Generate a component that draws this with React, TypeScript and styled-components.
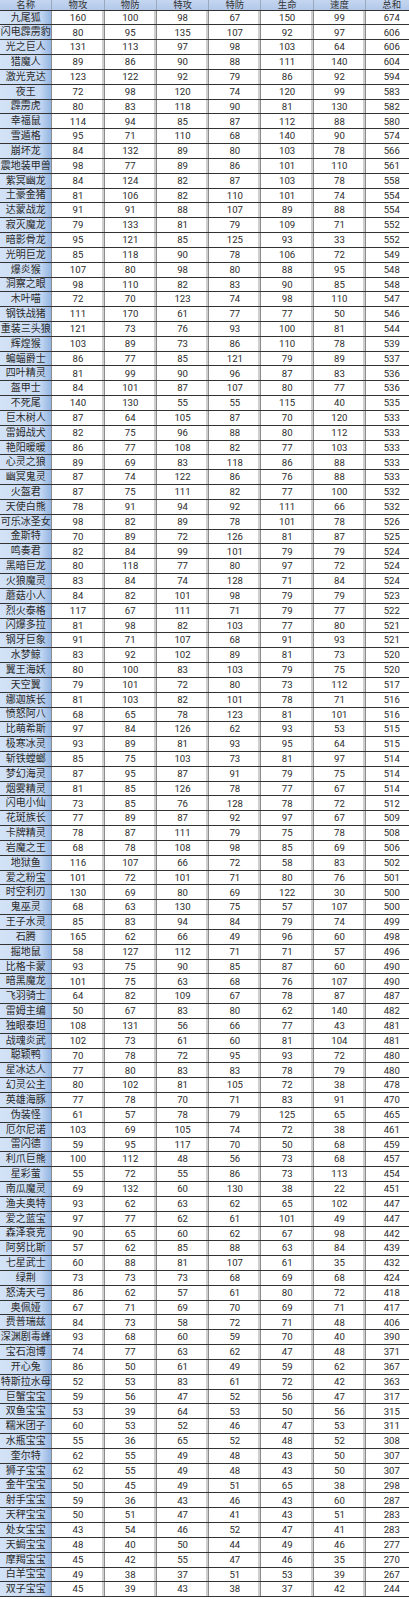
import React from 'react';
import styled, {createGlobalStyle} from 'styled-components';

const GlobalStyle = createGlobalStyle`
  html, body {
    margin: 0;
    padding: 0;
    background: #fff;
  }
  body {
    width: 409px;
    overflow: hidden;
    font-family: Roboto, "Noto Sans CJK SC", sans-serif;
  }
`;

const headers = ['名称', '物攻', '物防', '特攻', '特防', '生命', '速度', '总和'];

const raw = `
九尾狐 160 100 98 67 150 99 674
闪电霹雳豹 80 95 135 107 92 97 606
光之巨人 131 113 97 98 103 64 606
猎魔人 89 86 90 88 111 140 604
激光克达 123 122 92 79 86 92 594
夜王 72 98 120 74 120 99 583
霹雳虎 80 83 118 90 81 130 582
幸福鼠 114 94 85 87 112 88 580
雪遁格 95 71 110 68 140 90 574
崩坏龙 84 132 89 80 103 78 566
震地装甲兽 98 77 89 86 101 110 561
紫冥幽龙 84 124 82 87 103 78 558
土豪金猪 81 106 82 110 101 74 554
达蒙战龙 91 91 88 107 89 88 554
寂灭魔龙 79 133 81 79 109 71 552
暗影骨龙 95 121 85 125 93 33 552
光明巨龙 85 118 90 78 106 72 549
爆炎猴 107 80 98 80 88 95 548
洞察之眼 98 110 82 83 90 85 548
木叶喵 72 70 123 74 98 110 547
钢铁战猪 111 170 61 77 77 50 546
重装三头狼 121 73 76 93 100 81 544
辉煌猴 103 89 73 86 110 78 539
蝙蝠爵士 86 77 85 121 79 89 537
四叶精灵 81 99 90 96 87 83 536
盔甲士 84 101 87 107 80 77 536
不死尾 140 130 55 55 115 40 535
巨木树人 87 64 105 87 70 120 533
雷姆战犬 82 75 96 88 80 112 533
艳阳暖暖 86 77 108 82 77 103 533
心灵之狼 89 69 83 118 86 88 533
幽冥鬼灵 87 74 122 86 76 88 533
火盔君 87 75 111 82 77 100 532
天使白熊 78 91 94 92 111 66 532
可乐冰圣女 98 82 89 78 101 78 526
金斯特 70 89 72 126 81 87 525
鸣奏君 82 84 99 101 79 79 524
黑暗巨龙 80 118 77 80 97 72 524
火狼魔灵 83 84 74 128 71 84 524
蘑菇小人 84 82 101 98 79 79 523
烈火泰格 117 67 111 71 79 77 522
闪爆多拉 81 98 82 103 77 80 521
钢牙巨象 91 71 107 68 91 93 521
水梦鲸 83 92 102 89 81 73 520
翼王海妖 80 100 83 103 79 75 520
天空翼 79 101 72 80 73 112 517
娜迦族长 81 103 82 101 78 71 516
愤怒阿八 68 65 78 123 81 101 516
比萌希斯 97 84 126 62 93 53 515
极寒冰灵 93 89 81 93 95 64 515
斩铁螳螂 85 75 103 73 81 97 514
梦幻海灵 87 95 87 91 79 75 514
烟雾精灵 81 85 126 78 77 67 514
闪电小仙 73 85 76 128 78 72 512
花斑族长 77 89 87 92 97 67 509
卡牌精灵 78 87 111 79 75 78 508
岩魔之王 68 78 108 98 85 69 506
地狱鱼 116 107 66 72 58 83 502
爱之粉宝 101 72 101 71 80 76 501
时空利刃 130 69 80 69 122 30 500
鬼巫灵 68 63 130 75 57 107 500
王子水灵 85 83 94 84 79 74 499
石腾 165 62 66 49 96 60 498
掘地鼠 58 127 112 71 71 57 496
比格卡蒙 93 75 90 85 87 60 490
暗黑魔龙 101 75 63 68 76 107 490
飞羽骑士 64 82 109 67 78 87 487
雷姆主编 50 67 83 80 62 140 482
独眼泰坦 108 131 56 66 77 43 481
战魂炎武 102 73 61 60 81 104 481
聪颖鸭 70 78 72 95 93 72 480
星冰达人 77 80 83 83 78 79 480
幻灵公主 80 102 81 105 72 38 478
英雄海豚 77 78 70 71 83 91 470
伪装怪 61 57 78 79 125 65 465
厄尔尼诺 103 69 105 74 72 38 461
雷闪德 59 95 117 70 50 68 459
利爪巨熊 100 112 48 56 73 68 457
星彩萤 55 72 55 86 73 113 454
南瓜魔灵 69 132 60 130 38 22 451
渔夫奥特 93 62 63 62 65 102 447
爱之蓝宝 97 77 62 61 101 49 447
森泽衰克 90 65 60 62 67 98 442
阿努比斯 57 62 85 88 63 84 439
七星武士 60 88 81 107 61 35 432
绿荆 73 73 73 68 69 68 424
怒涛天弓 86 62 57 61 80 72 418
奥佩娅 67 71 69 70 69 71 417
费普瑞兹 84 73 58 72 71 48 406
深渊剧毒蜂 93 68 60 59 70 40 390
宝石泡博 74 77 63 62 47 48 371
开心兔 86 50 61 49 59 62 367
特斯拉水母 52 53 83 61 72 42 363
巨蟹宝宝 59 56 47 52 56 47 317
双鱼宝宝 53 39 64 53 50 56 315
糯米团子 60 53 52 46 47 53 311
水瓶宝宝 55 36 65 52 48 52 308
奎尔特 62 55 49 48 43 50 307
狮子宝宝 62 55 49 48 43 50 307
金牛宝宝 50 45 49 51 65 38 298
射手宝宝 59 36 43 46 43 60 287
天秤宝宝 50 51 47 41 43 51 283
处女宝宝 43 54 46 52 47 41 283
天蝎宝宝 48 40 50 44 49 46 277
摩羯宝宝 45 42 55 47 46 35 270
白羊宝宝 49 38 37 51 53 39 267
双子宝宝 45 39 43 38 37 42 244
`;

const rows = raw
  .trim()
  .split('\n')
  .map((line) => line.trim().split(/\s+/));

const COLS = 'repeat(8, 52.3px)';

const Sheet = styled.div`
  width: 418px;
  color: #2b2b2b;
`;

const Row = styled.div<{$head?: boolean}>`
  display: grid;
  grid-template-columns: ${COLS};
  height: ${({$head}) => ($head ? '10.6px' : '14.84px')};
  box-sizing: border-box;
  border-bottom: 1px solid #333;
  background: ${({$head}) => ($head ? 'linear-gradient(#c4d6f0, #b3c8e9)' : '#fff')};
`;

const Cell = styled.div`
  display: flex;
  align-items: center;
  justify-content: center;
  overflow: hidden;
  white-space: nowrap;
  box-sizing: border-box;
  border-right: 1px solid #8c8c8c;
  box-shadow: inset -2px 0 0 #cfcfcf;
  font-size: 9.6px;
  line-height: 1;
`;

const HeadCell = styled(Cell)`
  font-size: 9.4px;
  color: #333;
  border-right-color: #9aa8bc;
  box-shadow: none;
`;

const NameCell = styled(Cell)`
  background: linear-gradient(to right, #d3e2f6 0%, #c8daf3 78%, #93b5e2 100%);
  font-size: 10px;
  box-shadow: none;
`;

export default function App() {
  return (
    <>
      <GlobalStyle />
      <Sheet>
        <Row $head>
          {headers.map((h) => (
            <HeadCell key={h}>{h}</HeadCell>
          ))}
        </Row>
        {rows.map(([name, ...vals], i) => (
          <Row key={name + i}>
            <NameCell>{name}</NameCell>
            {vals.map((v, j) => (
              <Cell key={j}>{v}</Cell>
            ))}
          </Row>
        ))}
      </Sheet>
    </>
  );
}
